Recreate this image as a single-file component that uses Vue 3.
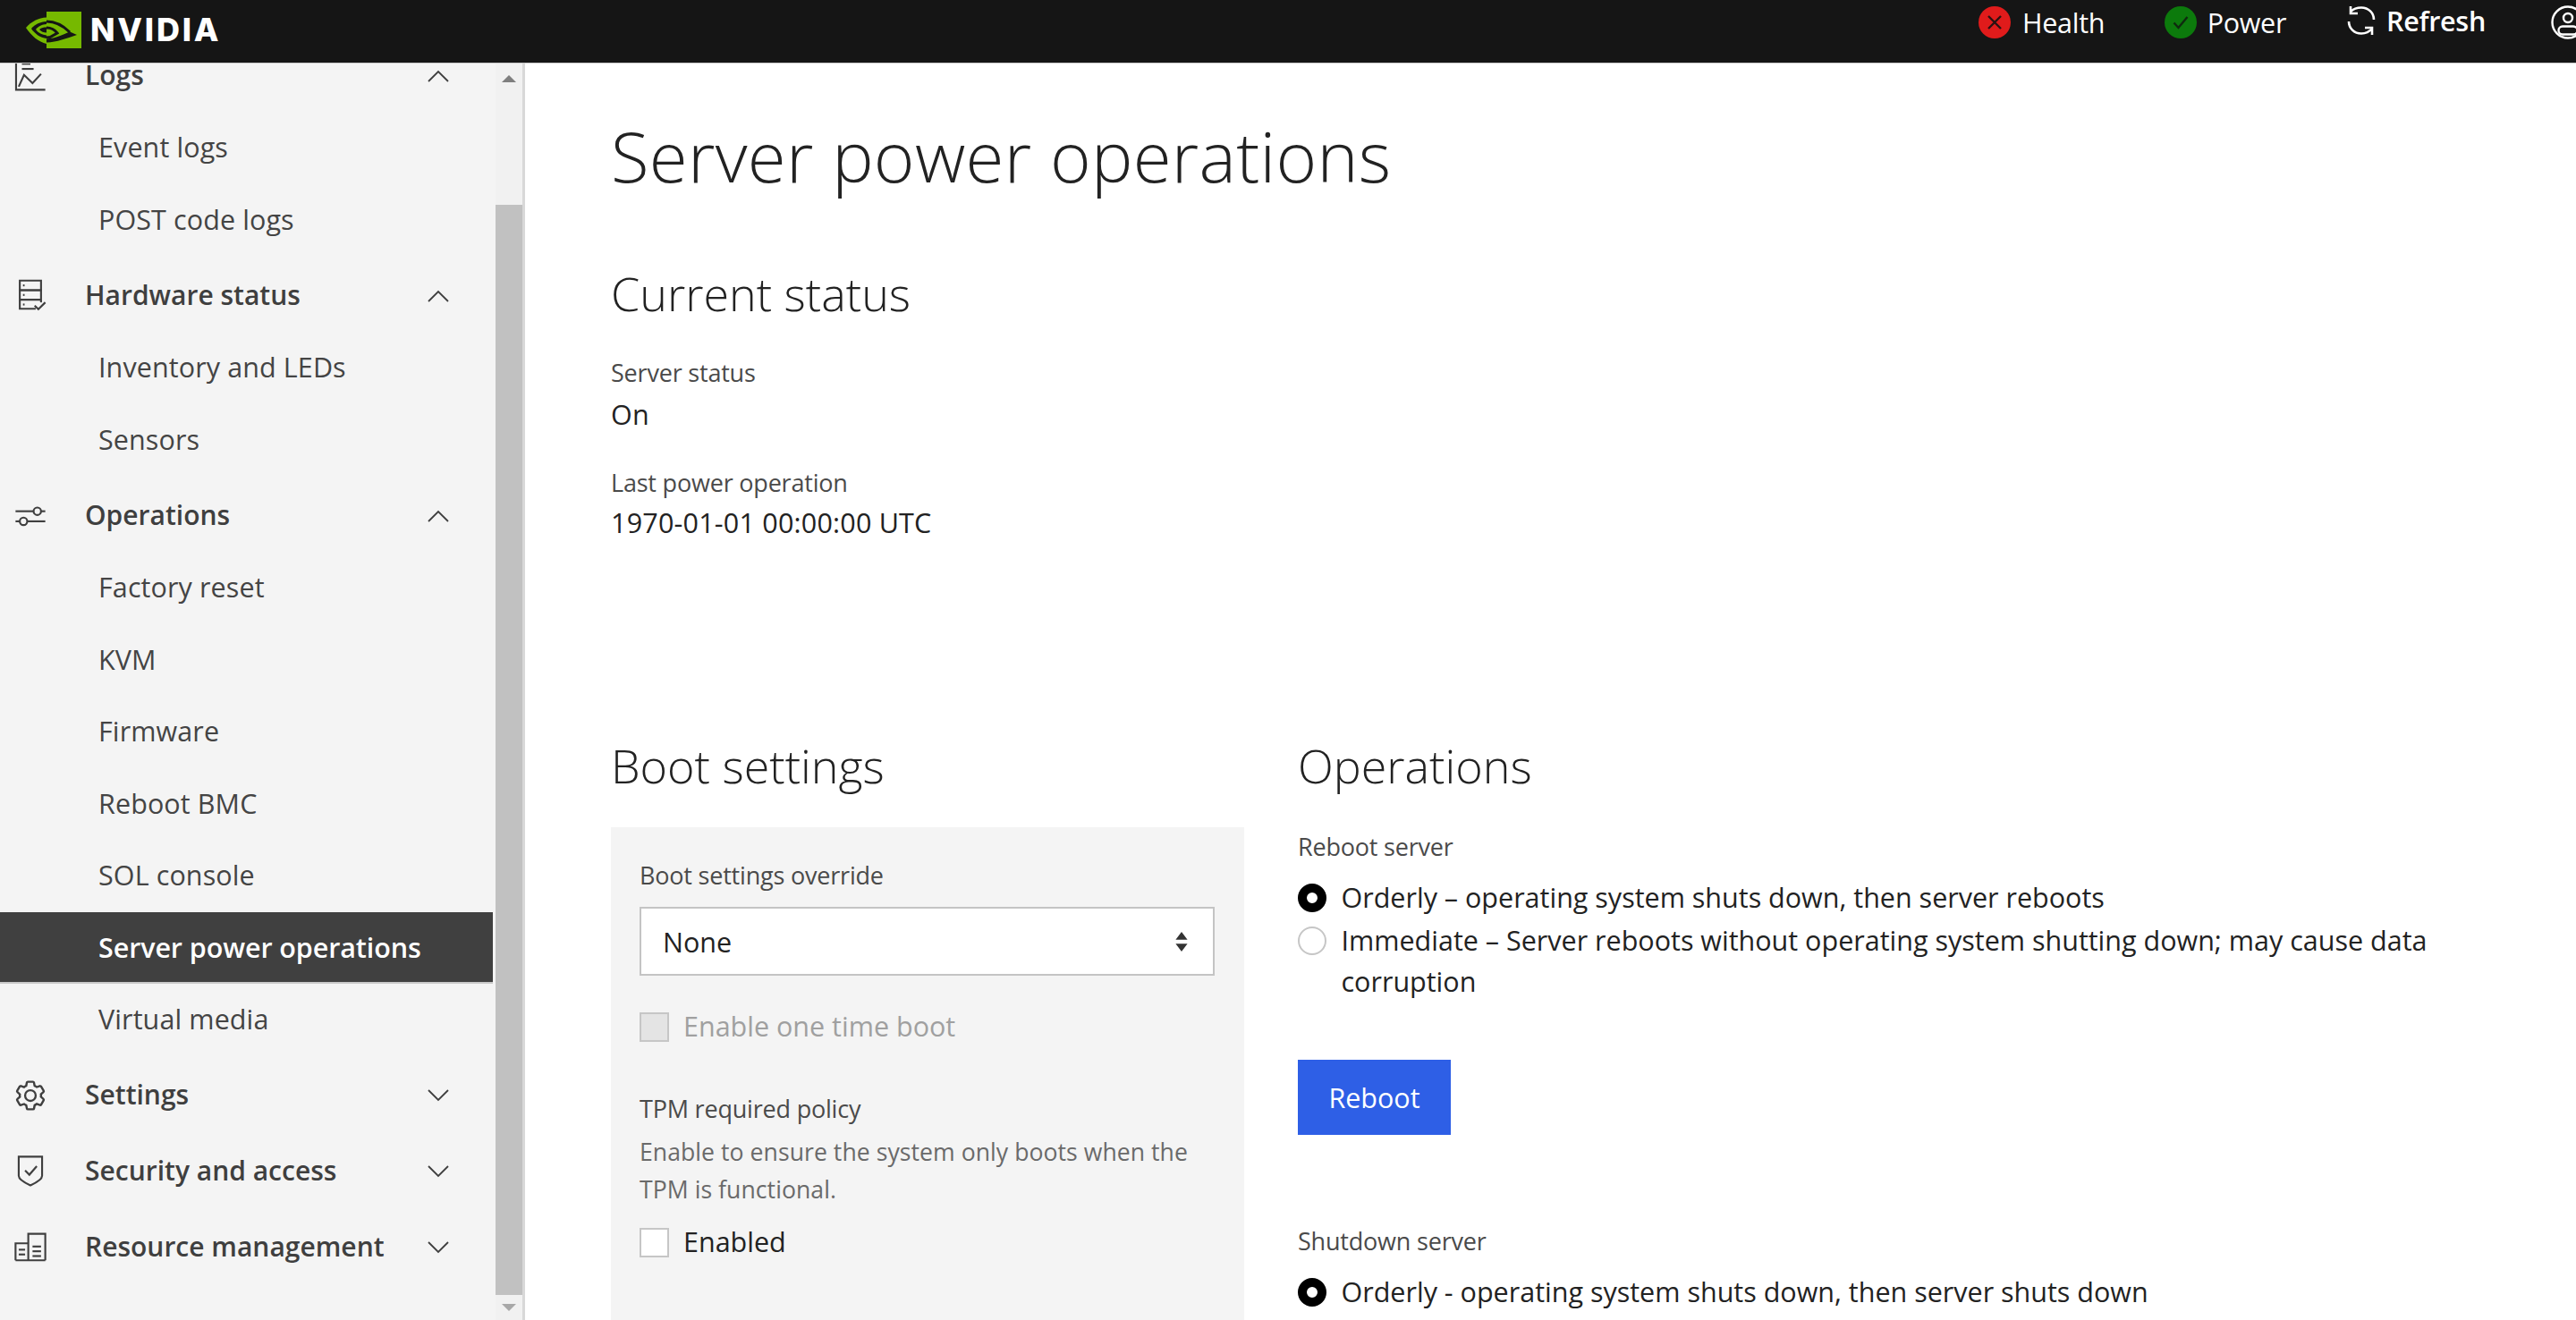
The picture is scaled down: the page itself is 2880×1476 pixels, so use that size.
<script setup>
const circle = (cx, cy, r) => `M${cx - r} ${cy}a${r} ${r} 0 1 0 ${2 * r} 0a${r} ${r} 0 1 0 ${-2 * r} 0Z`

const icons = {
  logs: ['M2.5 -2V29H30', 'M5 26L10 15L18 22.7L26 14', 'M8 9.3H19', 'M8 4.5H16'],
  hardware: [
    'M6 1.5H26V10.5H6Z', 'M6 10.5H26V19.5H6Z', 'M21 28H6V19.5', 'M26 19.5V22',
    'M9 6h1.5', 'M9 15h1.5', 'M9 24h1.5', 'M20 25L23.5 28.5L30 22'
  ],
  operations: [
    'M2 11.5H19', circle(22.5, 11.5, 3.5), 'M26 11.5H30',
    'M2 21H6', circle(9.5, 21, 3.5), 'M13 21H30'
  ],
  security: ['M5 2H27V20Q27 24 16 29Q5 24 5 20Z', 'M11 15L15 19L22 11'],
  resource: [
    'M14 28V3H30V28', 'M2 28V12H14', 'M2 28H30',
    'M5 18H11', 'M5 22.5H11', 'M18 15H26', 'M18 19.5H26', 'M18 24H26'
  ]
}

const gearPath = 'M27,16.76c0-.25,0-.5,0-.76s0-.51,0-.77l1.92-1.68A2,2,0,0,0,29.3,11L26.94,7a2,2,0,0,0-1.73-1,2,2,0,0,0-.64.1l-2.43.82a11.35,11.35,0,0,0-1.31-.75l-.51-2.52a2,2,0,0,0-2-1.61H13.64a2,2,0,0,0-2,1.61l-.51,2.52a11.48,11.48,0,0,0-1.32.75L7.43,6.06A2,2,0,0,0,6.79,6,2,2,0,0,0,5.06,7L2.7,11a2,2,0,0,0,.41,2.51L5,15.24c0,.25,0,.5,0,.76s0,.51,0,.77L3.11,18.45A2,2,0,0,0,2.7,21L5.06,25a2,2,0,0,0,1.73,1,2,2,0,0,0,.64-.1l2.43-.82a11.35,11.35,0,0,0,1.31.75l.51,2.52a2,2,0,0,0,2,1.61h4.72a2,2,0,0,0,2-1.61l.51-2.52a11.48,11.48,0,0,0,1.32-.75l2.42.82a2,2,0,0,0,.64.1,2,2,0,0,0,1.73-1L29.3,21a2,2,0,0,0-.41-2.51ZM25.21,24l-3.43-1.16a8.86,8.86,0,0,1-2.71,1.57L18.36,28H13.64l-.71-3.55a9.36,9.36,0,0,1-2.7-1.57L6.79,24,4.43,20l2.72-2.4a8.9,8.9,0,0,1,0-3.13L4.43,12,6.79,8l3.43,1.16a8.86,8.86,0,0,1,2.71-1.57L13.64,4h4.72l.71,3.55a9.36,9.36,0,0,1,2.7,1.57L25.21,8,27.57,12l-2.72,2.4a8.9,8.9,0,0,1,0,3.13L27.57,20ZM16,22a6,6,0,1,1,6-6A5.94,5.94,0,0,1,16,22Zm0-10a3.91,3.91,0,0,0-4,4,3.91,3.91,0,0,0,4,4,3.91,3.91,0,0,0,4-4A3.91,3.91,0,0,0,16,12Z'

const nav = [
  { label: 'Logs', icon: 'logs', open: true, items: ['Event logs', 'POST code logs'] },
  { label: 'Hardware status', icon: 'hardware', open: true, items: ['Inventory and LEDs', 'Sensors'] },
  {
    label: 'Operations', icon: 'operations', open: true,
    items: ['Factory reset', 'KVM', 'Firmware', 'Reboot BMC', 'SOL console', 'Server power operations', 'Virtual media']
  },
  { label: 'Settings', icon: 'settings', open: false, items: [] },
  { label: 'Security and access', icon: 'security', open: false, items: [] },
  { label: 'Resource management', icon: 'resource', open: false, items: [] }
]
const activeItem = 'Server power operations'
</script>

<template>
  <div class="page">
    <header class="topbar">
      <div class="brand">
        <svg class="logo" viewBox="28 12 64 43">
          <rect x="52" y="13" width="39" height="41" fill="#76b900" />
          <path d="M29 31C35 24 43 20 52 19.5V49C43 47 35 40 29 31Z" fill="#76b900" />
          <path d="M35 32C39 27 45 24.500 52 24V43C45 42 39 38 35 32Z" fill="#151515" />
          <path d="M40 33C43 29 47 27.500 52 27V39.500C47 39 43 37 40 33Z" fill="#76b900" />
          <path d="M44 33C46 31 49 30.500 52 30.500V36.500C49 36.500 46 35.500 44 33Z" fill="#151515" />
          <path d="M52 24C63 24 72 30 78 36" fill="none" stroke="#151515" stroke-width="3" />
          <path d="M52 31C57 31 61 33 64 37L56 41.500L52 42" fill="none" stroke="#151515" stroke-width="3" />
          <path d="M52 47.500C64 47 74 43 86 39L78 35.500C72 38 62 43 52 43.500Z" fill="#151515" />
        </svg>
        <span class="wordmark">NVIDIA</span>
      </div>
      <div class="status">
        <div class="status-item health">
          <svg class="dot" viewBox="0 0 36 36">
            <circle cx="18" cy="18" r="18" fill="#e01b1b" />
            <path d="M11 11L25 25M25 11L11 25" stroke="#2a1212" stroke-width="2.400" fill="none" />
          </svg>
          <span>Health</span>
        </div>
        <div class="status-item power">
          <svg class="dot" viewBox="0 0 36 36">
            <circle cx="18" cy="18" r="18" fill="#0c7a0c" />
            <path d="M10.500 18.500L15.500 24L25.500 12" stroke="#0f2a0f" stroke-width="2.400" fill="none" />
          </svg>
          <span>Power</span>
        </div>
        <div class="status-item refresh">
          <svg class="refresh-icon" viewBox="0 0 34 32">
            <path d="M5 6C8 3 12 1.500 17 1.500C25 1.500 31 7.500 31 15M29 25C26 28.500 22 30.500 17 30.500C9 30.500 3 24.500 3 17" fill="none" stroke="#fff" stroke-width="2.600" />
            <path d="M5 0V8H13M29 32V24H21" fill="none" stroke="#fff" stroke-width="2.600" />
          </svg>
          <span>Refresh</span>
        </div>
        <svg class="user-icon" viewBox="0 0 38 38">
          <circle cx="19" cy="19" r="17.500" fill="none" stroke="#fff" stroke-width="2.400" />
          <circle cx="19" cy="14" r="5" fill="none" stroke="#fff" stroke-width="2.400" />
          <rect x="8.500" y="23.500" width="21" height="9" rx="4.500" fill="none" stroke="#fff" stroke-width="2.400" />
        </svg>
      </div>
    </header>

    <div class="body">
      <aside class="sidebar">
        <nav class="nav">
          <div class="nav-scroll">
            <template v-for="group in nav" :key="group.label">
              <div class="group-row">
                <svg class="nav-icon" viewBox="0 0 32 32">
                  <path v-if="group.icon === 'settings'" :d="gearPath" fill="#3f3f3f" />
                  <template v-else>
                    <path v-for="d in icons[group.icon]" :key="d" :d="d" fill="none" stroke="#3f3f3f" stroke-width="1.800" />
                  </template>
                </svg>
                <span class="group-label">{{ group.label }}</span>
                <svg class="chevron" viewBox="0 0 24 14">
                  <path :d="group.open ? 'M1 13L12 2L23 13' : 'M1 1L12 12L23 1'" fill="none" stroke="#3f3f3f" stroke-width="1.800" />
                </svg>
              </div>
              <div
                v-for="item in group.items"
                :key="item"
                class="sub-row"
                :class="{ active: item === activeItem }"
              >{{ item }}</div>
            </template>
          </div>
        </nav>
        <div class="scrollbar">
          <div class="arrow arrow-up"></div>
          <div class="thumb"></div>
          <div class="arrow arrow-down"></div>
        </div>
      </aside>

      <main class="main">
        <h1 class="title">Server power operations</h1>

        <h2 class="heading first">Current status</h2>
        <div class="caption">Server status</div>
        <div class="value">On</div>
        <div class="caption second">Last power operation</div>
        <div class="value tight">1970-01-01 00:00:00 UTC</div>

        <div class="columns">
          <section>
            <h2 class="heading">Boot settings</h2>
            <div class="panel">
              <div class="caption">Boot settings override</div>
              <div class="select">
                <span>None</span>
                <svg class="select-arrows" viewBox="0 0 12 20">
                  <path d="M6 0L12 8H0Z M6 20L0 12H12Z" fill="#333" />
                </svg>
              </div>
              <label class="check disabled"><span class="box"></span><span class="check-text">Enable one time boot</span></label>
              <div class="caption tpm">TPM required policy</div>
              <p class="help">Enable to ensure the system only boots when the TPM is functional.</p>
              <label class="check enabled"><span class="box"></span><span class="check-text">Enabled</span></label>
            </div>
          </section>

          <section class="ops">
            <h2 class="heading">Operations</h2>
            <div class="caption op-caption">Reboot server</div>
            <div class="radio first-radio"><span class="circle on"></span><span class="radio-text">Orderly – operating system shuts down, then server reboots</span></div>
            <div class="radio"><span class="circle"></span><span class="radio-text">Immediate – Server reboots without operating system shutting down; may cause data corruption</span></div>
            <button class="primary">Reboot</button>
            <div class="caption shutdown">Shutdown server</div>
            <div class="radio shutdown-radio"><span class="circle on"></span><span class="radio-text">Orderly - operating system shuts down, then server shuts down</span></div>
          </section>
        </div>
      </main>
    </div>
  </div>
</template>

<style>
html, body { margin: 0; background: #fff; overflow: hidden; }
</style>

<style scoped>
.page {
  height: 1476px;
  display: flex;
  flex-direction: column;
  overflow: hidden;
  font-family: "Open Sans", "Liberation Sans", sans-serif;
  color: #222;
}
.topbar {
  flex: none;
  height: 70px;
  background: #151515;
  border-bottom: 1px solid #c8c8c8;
  display: flex;
  align-items: center;
  justify-content: space-between;
  overflow: hidden;
}
.brand { display: flex; align-items: center; padding-left: 28px; }
.logo { width: 64px; height: 43px; display: block; margin-top: -3px; }
.wordmark {
  margin-left: 9px;
  margin-top: -5px;
  font-family: Inter, "Liberation Sans", sans-serif;
  font-weight: 800;
  font-size: 36px;
  line-height: 40px;
  letter-spacing: 2.800px;
  color: #fff;
}
.status { display: flex; align-items: center; margin-top: -20px; margin-right: -10px; }
.status-item {
  display: flex;
  align-items: center;
  gap: 13px;
  color: #fff;
  font-size: 30.500px;
  line-height: 40px;
  letter-spacing: -0.300px;
  margin-right: 68px;
}
.status-item.health { margin-right: 67px; }
.status-item.power { margin-right: 67px; gap: 11.500px; }
.dot { width: 36px; height: 36px; flex: none; }
.refresh { font-weight: 600; margin-right: 73px; gap: 11px; margin-top: -4px; }
.refresh-icon { width: 34px; height: 32px; flex: none; }
.user-icon { width: 38px; height: 38px; flex: none; }

.body { flex: 1; min-height: 0; display: flex; }
.sidebar {
  flex: none;
  width: 584px;
  background: #f4f4f4;
  border-right: 3px solid #d8d8d8;
  display: flex;
  overflow: hidden;
}
.nav { width: 551px; margin-right: 3px; overflow: hidden; }
.nav-scroll { margin-top: -27px; }
.group-row {
  height: 81px;
  margin-top: 4px;
  display: flex;
  align-items: center;
  padding-left: 15px;
  color: #3f3f3f;
}
.nav-scroll > .group-row:first-child { margin-top: 0; }
.nav-icon { width: 38px; height: 38px; flex: none; overflow: visible; }
.group-label {
  margin-left: 42px;
  margin-top: -3px;
  font-size: 30px;
  font-weight: 600;
}
.chevron { width: 24px; height: 14px; margin-left: auto; margin-right: 49px; flex: none; }
.sub-row {
  height: 80.500px;
  line-height: 79px;
  padding-left: 110px;
  font-size: 30.500px;
  letter-spacing: 0.100px;
  color: #444;
}
.sub-row.active {
  background: #404040;
  border-bottom: 2px solid #c9c9c9;
  height: 78.500px;
  line-height: 78px;
  color: #fff;
  font-weight: 600;
  letter-spacing: -0.100px;
}
.scrollbar {
  width: 30px;
  flex: none;
  background: #f1f1f1;
  display: flex;
  flex-direction: column;
  align-items: center;
}
.arrow { width: 0; height: 0; border-left: 8px solid transparent; border-right: 8px solid transparent; flex: none; }
.arrow-up { border-bottom: 8px solid #7f7f7f; margin-top: 13px; }
.arrow-down { border-top: 8px solid #a8a8a8; margin-top: 10px; }
.thumb { width: 100%; flex: none; height: 1219px; margin-top: 137px; background: #c1c1c1; }

.main { flex: 1; min-width: 0; padding-left: 96px; overflow: hidden; }
.title {
  margin: 53px 0 0;
  font-size: 78px;
  line-height: 100px;
  font-weight: 300;
  letter-spacing: 0.300px;
  color: #222;
}
.heading {
  margin: 0;
  font-size: 52px;
  line-height: 60px;
  font-weight: 300;
  letter-spacing: 0;
  color: #222;
}
.heading.first { margin-top: 74px; margin-bottom: 39px; }
.caption {
  font-size: 27px;
  line-height: 40px;
  letter-spacing: -0.200px;
  color: #4a4a4a;
}
.caption.second { margin-top: 37px; }
.value {
  font-size: 30.500px;
  line-height: 40px;
  letter-spacing: 0.200px;
  color: #222;
  margin-top: 6px;
}
.value.tight { margin-top: 4px; }
.columns {
  margin-top: 222px;
  display: grid;
  grid-template-columns: 708px 1fr;
  column-gap: 60px;
}
.panel {
  margin-top: 39px;
  background: #f4f4f4;
  padding: 34px 33px 200px 32px;
}
.select {
  margin-top: 15px;
  height: 77px;
  box-sizing: border-box;
  background: #fff;
  border: 2px solid #c4c4c4;
  display: flex;
  align-items: center;
  justify-content: space-between;
  padding: 0 27px 0 24px;
  font-size: 30.500px;
  color: #222;
}
.select-arrows { width: 16px; height: 22px; flex: none; }
.check {
  display: flex;
  align-items: center;
  gap: 16px;
  height: 40px;
  font-size: 30.500px;
  color: #222;
}
.check-text { margin-top: -3px; }
.box {
  width: 33px;
  height: 33px;
  box-sizing: border-box;
  border: 2px solid #c6c6c6;
  background: #fff;
  flex: none;
}
.check.disabled { margin-top: 37px; color: #a0a0a0; }
.check.disabled .box { background: #e4e4e4; }
.check.enabled { margin-top: 18px; }
.caption.tpm { margin-top: 52px; }
.help {
  margin: 7px 0 0;
  font-size: 26.600px;
  line-height: 42px;
  letter-spacing: 0.050px;
  color: #6a6a6a;
}
.ops { padding-right: 60px; }
.op-caption { margin-top: 41px; }
.radio {
  display: flex;
  gap: 16.500px;
  font-size: 30.500px;
  line-height: 46px;
  color: #222;
  max-width: 1270px;
  margin-top: 4px;
}
.radio-text { margin-top: -2px; }
.radio.first-radio { margin-top: 15px; }
.radio.shutdown-radio { margin-top: 15px; }
.circle {
  width: 32px;
  height: 32px;
  margin-top: 6px;
  box-sizing: border-box;
  flex: none;
  border-radius: 50%;
  border: 2px solid #c6c6c6;
  background: #fff;
}
.circle.on { border: 10px solid #000; }
.primary {
  display: block;
  margin-top: 65px;
  width: 171px;
  height: 84px;
  border: none;
  padding: 0;
  background: #2e5fe6;
  color: #fff;
  font-family: inherit;
  font-size: 30.500px;
}
.caption.shutdown { margin-top: 99px; }
</style>
